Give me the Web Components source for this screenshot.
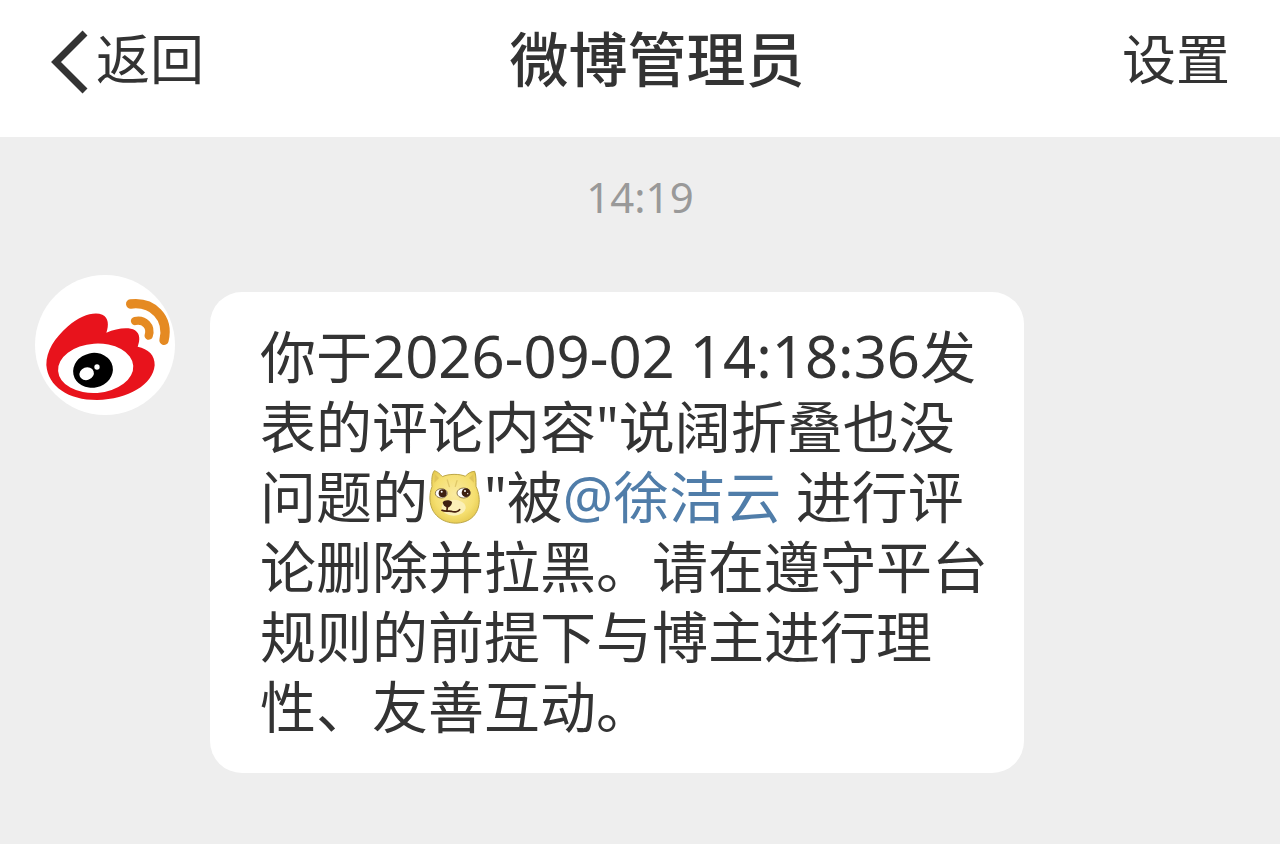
<!DOCTYPE html>
<html lang="zh-CN">
<head>
<meta charset="utf-8">
<meta name="viewport" content="width=device-width, initial-scale=1">
<title>微博管理员</title>
<style>
  body {
    margin: 0;
    background: #eee;
    color: #333;
    font-family: "Noto Sans", "Noto Sans CJK SC", sans-serif;
  }
</style>
</head>
<body>
<chat-page>
  <nav-bar slot="header">
    <span slot="back">返回</span>
    微博管理员
    <span slot="action">设置</span>
  </nav-bar>
  <time-stamp>14:19</time-stamp>
  <chat-message>
    <weibo-avatar slot="avatar"></weibo-avatar>
    你于<message-date>2026-09-02 14:18:36</message-date>发<br>表的评论内容"说阔折叠也没<br>问题的<doge-emoji></doge-emoji>"被<user-mention>@徐洁云</user-mention> 进行评<br>论删除并拉黑。请在遵守平台<br>规则的前提下与博主进行理<br>性、友善互动。
  </chat-message>
</chat-page>

<script>
/* eslint-disable require-jsdoc */
function define(name, html) {
  const tmpl = document.createElement('template');
  // Whitespace at the ends would show up as spaces around inline elements.
  tmpl.innerHTML = html.trim();
  customElements.define(name, class extends HTMLElement {
    constructor() {
      super();
      this.attachShadow({mode: 'open'}).appendChild(tmpl.content.cloneNode(true));
    }
  });
}

define('chat-page', `
<style>
  :host {
    display: flex;
    flex-direction: column;
    min-height: 100vh;
  }
  main {
    display: flex;
    flex-direction: column;
    gap: 46px;
    padding: 28px 35px;
  }
</style>
<slot name="header"></slot>
<main><slot></slot></main>
`);

define('nav-bar', `
<style>
  :host {
    display: block;
    background: #fff;
  }
  header {
    display: flex;
    align-items: center;
    padding: 19px 50px 38px;
  }
  h1 {
    flex: 1;
    margin: 0;
    padding-right: 12px;
    text-align: center;
    font-size: 59px;
    font-weight: 500;
    line-height: 80px;
  }
  button {
    display: flex;
    align-items: center;
    gap: 8px;
    padding: 0;
    border: 0;
    background: none;
    color: inherit;
    font: inherit;
    font-size: 54px;
    line-height: 80px;
    cursor: pointer;
  }
  svg {
    width: 38px;
    height: 72px;
  }
</style>
<header>
  <button class="back" type="button">
    <svg viewBox="0 0 38 72" fill="none" stroke="currentColor" stroke-width="7" aria-hidden="true">
      <path d="M35 10 L6 39 L35 68"></path>
    </svg>
    <slot name="back"></slot>
  </button>
  <h1><slot></slot></h1>
  <button class="action" type="button"><slot name="action"></slot></button>
</header>
`);

define('time-stamp', `
<style>
  :host {
    display: block;
    text-align: center;
    color: #999;
    font-size: 42px;
    line-height: 64px;
  }
</style>
<time><slot></slot></time>
`);

define('chat-message', `
<style>
  :host {
    display: flex;
    align-items: flex-start;
    gap: 35px;
  }
  .bubble {
    margin-top: 17px;
    padding: 29px 36px 32px 50px;
    border-radius: 32px;
    background: #fff;
    font-size: 56px;
    line-height: 70px;
  }
  p { margin: 0; }
</style>
<slot name="avatar"></slot>
<div class="bubble"><p><slot></slot></p></div>
`);

define('message-date', `
<style>
  :host {
    font-size: 58px;
    line-height: 1;
  }
</style><time><slot></slot></time>
`);

define('user-mention', `
<style>
  a {
    color: #507da9;
    text-decoration: none;
  }
</style><a href="#"><slot></slot></a>
`);

define('weibo-avatar', `
<style>
  :host {
    flex: none;
    width: 140px;
    height: 140px;
    border-radius: 50%;
    overflow: hidden;
    background: #fff;
  }
  svg { display: block; }
</style>
<svg viewBox="45 42 420 420" role="img" aria-label="微博">
  <path fill="#e8131c" d="M79 312 C79 270 103 232 144 196 C181 163 222 151 247 161
    C266 170 267 192 259 215 C290 202 326 197 345 208 C360 218 361 237 353 257
    C385 264 405 282 404 313 C399 370 325 416 231 417 C145 417 84 377 79 312 Z"></path>
  <ellipse fill="#fff" cx="227" cy="322" rx="113" ry="74" transform="rotate(-4 227 322)"></ellipse>
  <ellipse cx="219" cy="328" rx="60" ry="52" transform="rotate(-12 219 328)"></ellipse>
  <ellipse fill="#fff" cx="200" cy="338" rx="22" ry="19" transform="rotate(-20 200 338)"></ellipse>
  <circle fill="#fff" cx="231" cy="318" r="8"></circle>
  <g fill="none" stroke="#e58a22" stroke-linecap="round">
    <path stroke-width="28" d="M332 129 C398 121 448 170 432 238"></path>
    <path stroke-width="25" d="M345 180 C373 174 395 196 386 224"></path>
  </g>
</svg>
`);

define('doge-emoji', `
<style>
  :host {
    display: inline-block;
    width: 56px;
    height: 56px;
    vertical-align: -6px;
  }
  svg { display: block; }
</style><svg viewBox="24 20 168 168" role="img" aria-label="doge">
  <defs>
    <radialGradient id="fur" cx="50%" cy="45%" r="58%">
      <stop offset="0" stop-color="#faeaa0"></stop>
      <stop offset=".7" stop-color="#f5df70"></stop>
      <stop offset="1" stop-color="#e6ca50"></stop>
    </radialGradient>
  </defs>
  <g fill="url(#fur)" stroke="#bda748" stroke-width="3" stroke-linejoin="round">
    <path d="M36 76 C34 56 36 36 43 28 C52 30 61 39 67 46 C86 37 119 37 136 45
      C143 36 154 30 164 30 C169 44 168 61 168 75 C188 119 176 162 142 178
      C107 194 61 184 40 150 C27 128 27 98 36 76 Z"></path>
  </g>
  <path fill="#e0c45a" d="M44 38 L57 50 L43 64 Z M160 39 L147 50 L162 64 Z"></path>
  <path fill="none" stroke="#e0c868" stroke-width="4" stroke-linecap="round" d="M82 56 L88 76 M111 58 L106 75"></path>
  <ellipse fill="#fbf0b8" cx="101" cy="139" rx="36" ry="24"></ellipse>
  <g stroke="#5b421b" stroke-width="2">
    <ellipse fill="#fff" cx="64" cy="96" rx="18" ry="14"></ellipse>
    <ellipse fill="#fff" cx="131" cy="95" rx="20" ry="15"></ellipse>
  </g>
  <g fill="#3d2010">
    <circle cx="68" cy="96" r="12"></circle>
    <circle cx="138" cy="94" r="13"></circle>
    <path d="M68 123 C72 115 91 115 96 122 C96 131 89 138 82 139 C74 137 69 131 68 123 Z"></path>
  </g>
  <path fill="none" stroke="#4a220f" stroke-width="5" stroke-linecap="round"
    d="M82 136 L81 146 M66 147 C75 152 87 148 94 150 C103 154 116 151 119 145"></path>
  <g fill="#fff">
    <circle cx="65" cy="91" r="3"></circle>
    <circle cx="135" cy="89" r="3"></circle>
    <circle cx="143" cy="97" r="2"></circle>
  </g>
</svg>
`);
/* eslint-enable require-jsdoc */
</script>
</body>
</html>
